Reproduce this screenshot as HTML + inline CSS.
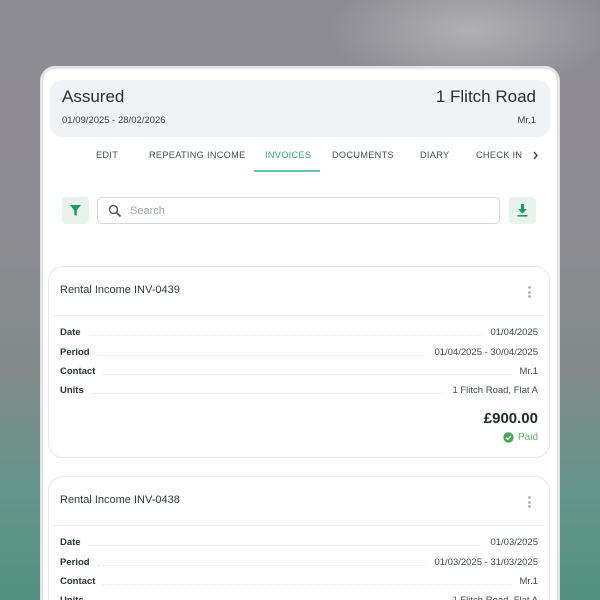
<!DOCTYPE html>
<html><head><meta charset="utf-8"><style>
*{box-sizing:border-box;margin:0;padding:0}
html,body{width:600px;height:600px;overflow:hidden}
body{font-family:"Liberation Sans",sans-serif;position:relative;background:#8d8c92}
.wrap{position:absolute;left:0;top:0;width:600px;height:600px;overflow:hidden;
background:radial-gradient(ellipse 140px 60px at 470px 30px,rgba(200,200,204,.6),rgba(200,200,204,0)),linear-gradient(180deg,#8d8c92 0%,#8e8d93 40%,#818a89 62%,#64958a 82%,#52927f 100%);}
.panel{position:absolute;left:40px;top:66px;width:520px;height:534px;background:#fff;border:3px solid #e4e4e6;border-bottom:none;border-radius:15px 15px 0 0;}
.hdr{position:absolute;left:50px;top:80px;width:500px;height:57px;background:#f0f3f5;border-radius:12px;color:#2a2f33}
.t{position:absolute;font-size:17px}
.s{position:absolute;font-size:9.5px;color:#3a3f44}
.tab{position:absolute;top:150px;font-size:9.2px;letter-spacing:.3px;color:#4a4f55}
.ul{position:absolute;left:254px;top:170px;width:66px;height:2px;background:#6cc3a4}
.btn{position:absolute;top:197px;width:27px;height:27px;background:#e8f3ee;border-radius:4px}
.search{position:absolute;left:97px;top:197px;width:403px;height:27px;border:1px solid #d6d8da;border-radius:5px}
.card{position:absolute;left:48px;width:502px;border:1px solid #e6e8ea;border-radius:15px;background:#fff}
.ct{position:absolute;left:11px;top:17px;font-size:11px;color:#33383d}
.dots{position:absolute;right:18px;top:19px;width:3px}
.dots i{display:block;width:3px;height:3px;border-radius:50%;background:#b5b8bb;margin-bottom:1.5px}
.div{position:absolute;left:4px;right:4px;top:48px;height:1px;background:#eef0f1}
.row{position:absolute;left:11px;right:11px;height:12px;font-size:9.5px;display:flex;align-items:flex-end}
.row b{color:#2c3136;font-weight:bold}
.row span.l{flex:1;border-bottom:1px dotted #e3e5e7;margin:0 8px 2px}
.row em{font-style:normal;color:#44494e}
</style></head><body><div class="wrap">
<div class="panel"></div>
<div class="hdr">
<div class="t" style="left:12px;top:7px">Assured</div>
<div class="t" style="right:14px;top:7px">1 Flitch Road</div>
<div class="s" style="left:12px;top:35px">01/09/2025 - 28/02/2026</div>
<div class="s" style="right:14px;top:35px">Mr.1</div>
</div>
<div class="tab" style="left:96px">EDIT</div>
<div class="tab" style="left:149px">REPEATING INCOME</div>
<div class="tab" style="left:265px;color:#3aa57e">INVOICES</div>
<div class="tab" style="left:332px">DOCUMENTS</div>
<div class="tab" style="left:420px">DIARY</div>
<div class="tab" style="left:476px">CHECK IN</div>
<svg style="position:absolute;left:532px;top:151px" width="7" height="9" viewBox="0 0 7 9"><path d="M2 1l3 3.5L2 8" stroke="#444" stroke-width="1.4" fill="none"/></svg>
<div class="ul"></div>
<div class="btn" style="left:62px"><svg width="27" height="27" viewBox="0 0 27 27"><path d="M8 8h11l-4.3 5.5V19l-2.4-1.3v-4.2z" fill="#1f9a66"/></svg></div>
<div class="search"><svg style="position:absolute;left:10px;top:6px" width="14" height="14" viewBox="0 0 14 14"><circle cx="5.5" cy="5.5" r="4" stroke="#555" stroke-width="1.4" fill="none"/><path d="M8.5 8.5l4 4" stroke="#555" stroke-width="1.6"/></svg><span style="position:absolute;left:32px;top:7px;font-size:11px;color:#a0a4a8">Search</span></div>
<div class="btn" style="left:509px"><svg width="27" height="27" viewBox="0 0 27 27"><path d="M12 7h3v5h3l-4.5 4.5L9 12h3z" fill="#1f9a66"/><rect x="8.5" y="18" width="10" height="1.6" fill="#1f9a66"/></svg></div>

<div class="card" style="top:266px;height:192px">
<div class="ct">Rental Income INV-0439</div>
<div class="dots"><i></i><i></i><i></i></div>
<div class="div"></div>
<div class="row" style="top:59px"><b>Date</b><span class="l"></span><em>01/04/2025</em></div>
<div class="row" style="top:79px"><b>Period</b><span class="l"></span><em>01/04/2025 - 30/04/2025</em></div>
<div class="row" style="top:98px"><b>Contact</b><span class="l"></span><em>Mr.1</em></div>
<div class="row" style="top:117px"><b>Units</b><span class="l"></span><em>1 Flitch Road, Flat A</em></div>
<div style="position:absolute;right:11px;top:143px;font-size:15px;font-weight:bold;color:#23282c">£900.00</div>
<div style="position:absolute;right:11px;top:165px;font-size:10px;color:#5bb56c;display:flex;align-items:center"><svg width="11" height="11" viewBox="0 0 11 11" style="margin-right:4px"><circle cx="5.5" cy="5.5" r="5.2" fill="#43a85a"/><path d="M3 5.6l1.8 1.7L8 4" stroke="#fff" stroke-width="1.3" fill="none"/></svg>Paid</div>
</div>

<div class="card" style="top:476px;height:124px;border-bottom:none;border-radius:15px 15px 0 0;overflow:hidden">
<div class="ct">Rental Income INV-0438</div>
<div class="dots"><i></i><i></i><i></i></div>
<div class="div"></div>
<div class="row" style="top:59px"><b>Date</b><span class="l"></span><em>01/03/2025</em></div>
<div class="row" style="top:79px"><b>Period</b><span class="l"></span><em>01/03/2025 - 31/03/2025</em></div>
<div class="row" style="top:98px"><b>Contact</b><span class="l"></span><em>Mr.1</em></div>
<div class="row" style="top:117px"><b>Units</b><span class="l"></span><em>1 Flitch Road, Flat A</em></div>
</div>
</div></body></html>
